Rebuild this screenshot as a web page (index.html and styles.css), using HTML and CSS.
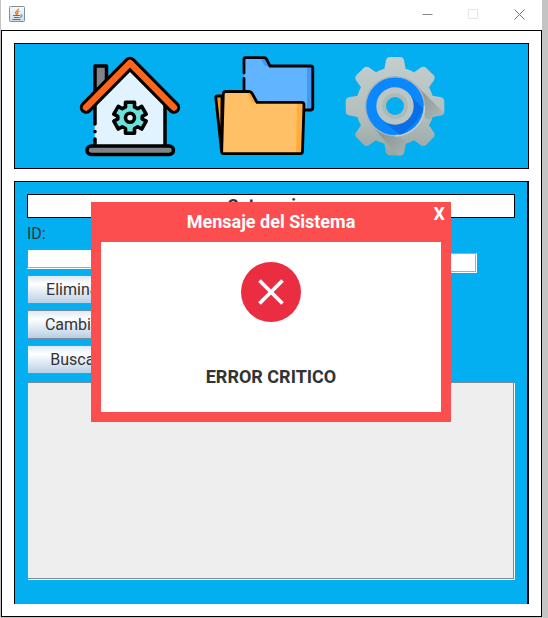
FILE: index.html
```html
<!DOCTYPE html>
<html lang="es">
<head>
<meta charset="utf-8">
<title>Mensaje del Sistema</title>
<link rel="stylesheet" href="styles.css">
</head>
<body>
<div class="window">
  <header class="titlebar">
    <svg class="java" viewBox="0 0 16 16" aria-hidden="true">
      <defs><linearGradient id="jbg" x2="0" y2="1"><stop offset="0" stop-color="#fafbfc"/><stop offset="1" stop-color="#cfdae4"/></linearGradient></defs>
      <rect x=".5" y=".5" width="15" height="15" rx="1" fill="url(#jbg)" stroke="#7890a4"/>
      <path d="M9.500 2.500C10 4.500 6 5 6.500 7L8 9M10.500 5C8 6 8 6.500 8.800 8.500" fill="none" stroke="#ec7d25" stroke-width="1.300"/>
      <path d="M4 9.500h7M5 11.500h5.500M3.500 13.500h8M11.500 9c2.500-.5 2 2-.5 2.300" fill="none" stroke="#56768f"/>
    </svg>
    <div class="controls">
      <button aria-label="Minimizar"><svg viewBox="0 0 11 11"><path d="M.5 5.500h10" stroke="#888"/></svg></button>
      <button aria-label="Maximizar" disabled><svg viewBox="0 0 11 11"><path d="M.5 .5h9v9h-9z" stroke="#e5e5e5"/></svg></button>
      <button aria-label="Cerrar"><svg viewBox="0 0 11 11"><path d="M.5 .5l10 10M10.500 .5l-10 10" stroke="#777"/></svg></button>
    </div>
  </header>
  <main class="frame">
    <nav class="toolbar">
      <button aria-label="Inicio">
        <svg viewBox="0 0 100 100">
          <path d="M14.700 42 50 9 85 42V90H14.700z" fill="#e0f3ff"/>
          <path d="M15 40V10h11.500v19z" fill="#80848a" stroke="#000" stroke-width="3.500" stroke-linejoin="round"/>
          <path d="M15 50V68M15 75.500v.2M15 83v6M85 50V90" stroke="#000" stroke-width="3.500" stroke-linecap="round"/>
          <path d="M6 51.500 50 7 94 51.500" fill="none" stroke="#000" stroke-width="12.500" stroke-linecap="round" stroke-linejoin="round"/>
          <path d="M6 51.500 50 7 94 51.500" fill="none" stroke="#ff651a" stroke-width="6.500" stroke-linecap="round" stroke-linejoin="round"/>
          <rect x="7" y="90" width="86.500" height="8.500" rx="4.200" fill="#80848a" stroke="#000" stroke-width="3.500"/>
          <g transform="translate(50 61.700)" stroke="#000" stroke-width="3.600" stroke-linejoin="round">
            <path d="M-4.500-15.500h9v4.700l3.200 1.800 4-2.300 4.500 7.800-4 2.200v2.600l4 2.200-4.500 7.800-4-2.300-3.200 1.800v4.700h-9v-4.700l-3.200-1.800-4 2.300-4.500-7.800 4-2.200v-2.600l-4-2.200 4.500-7.800 4 2.300 3.200-1.800z" fill="#6be3dc"/>
            <circle r="4.500" fill="#e0f3ff"/>
          </g>
        </svg>
      </button>
      <button aria-label="Carpetas">
        <svg viewBox="0 0 100 100">
          <path d="M31 3q0-1.300 1.500-1.300H51q1.700 0 2.500 1.500l3.500 6.800H98q1.800 0 1.800 1.800V52q0 2-2 2H31z" fill="#61b4ff"/>
          <path d="M94 10h5.500v43H94zM47 2h5l5 8h-5z" fill="#3f9af4"/>
          <path d="M31 17V3.500q0-1.800 1.500-1.800H51q1.700 0 2.500 1.500l3.500 6.800H97.500q2.300 0 2.300 2.300V51.500q0 2.500-2.500 2.500H91M31 22.500V35" fill="none" stroke="#000" stroke-width="2.800" stroke-linecap="round"/>
          <path d="M9 40H4q-1.300 0-1.200 1.500L8.500 95z" fill="#ff9a14" stroke="#000" stroke-width="2.800" stroke-linejoin="round"/>
          <path d="M10.300 38q0-2.500 2.500-2.500H36q2 0 3 1.800l5 9h44.500q2.500 0 2.500 2.500L89.500 95.500q0 2.200-2.300 2.200H11q-2.300 0-2.300-2.300z" fill="#ffc066"/>
          <path d="M84 46h6l-1 51h-6zM34 36h4l6 11h-5z" fill="#ffae3d"/>
          <path d="M10.300 38q0-2.500 2.500-2.500H36q2 0 3 1.800l5 9h44.500q2.500 0 2.500 2.500L89.500 95.500q0 2.200-2.300 2.200H11q-2.300 0-2.300-2.300z" fill="none" stroke="#000" stroke-width="2.800"/>
        </svg>
      </button>
      <button aria-label="Ajustes">
        <svg viewBox="0 0 100 100">
          <defs>
            <linearGradient id="metal" gradientUnits="userSpaceOnUse" x1="49" y1="1" x2="49" y2="100"><stop offset="0" stop-color="#c3cfce"/><stop offset=".6" stop-color="#b3bebd"/><stop offset="1" stop-color="#98a5a4"/></linearGradient>
            <linearGradient id="shade" gradientUnits="userSpaceOnUse" x1="55" y1="55" x2="80" y2="80"><stop offset="0" stop-color="#7f8a8a"/><stop offset="1" stop-color="#adb7b6"/></linearGradient>
            <path id="tooth" d="M38 15 40 4Q41 1 44 1H54Q57 1 58 4L60 15z"/>
            <clipPath id="gear">
              <circle cx="49" cy="50.300" r="39"/>
              <use href="#tooth"/><use href="#tooth" transform="rotate(45 49 50.300)"/><use href="#tooth" transform="rotate(90 49 50.300)"/><use href="#tooth" transform="rotate(135 49 50.300)"/><use href="#tooth" transform="rotate(180 49 50.300)"/><use href="#tooth" transform="rotate(225 49 50.300)"/><use href="#tooth" transform="rotate(270 49 50.300)"/><use href="#tooth" transform="rotate(315 49 50.300)"/>
            </clipPath>
            <clipPath id="disc"><circle cx="49" cy="50.300" r="28.500"/></clipPath>
          </defs>
          <g clip-path="url(#gear)">
            <path d="M-2 0h104v102h-104z" fill="url(#metal)"/>
            <path d="M70 29 98 57 82 64 79 62 78 50zM28 72 52 100H59V90L63 86 49 80z" fill="url(#shade)" opacity=".8"/>
          </g>
          <circle cx="49" cy="50.300" r="29.500" fill="#0a88fc" stroke="#a8b5b8" stroke-width="1.500"/>
          <path d="M78.500 50A29.500 29.500 0 0 1 49 79.800" fill="none" stroke="#c3d0d4" stroke-width="1.500"/>
          <path d="M62 37 78 53 70 66 55 80 36 64z" fill="#0a6fe6" clip-path="url(#disc)"/>
          <circle cx="49" cy="50" r="18.700" fill="#bac6c5"/>
          <circle cx="49" cy="50" r="13" fill="#aebab8"/>
          <circle cx="49" cy="50" r="9" fill="#03aff1"/>
        </svg>
      </button>
    </nav>
    <section class="panel">
      <h1>Categorias</h1>
      <form class="form">
        <div class="left">
          <label for="id">ID:</label>
          <input id="id" type="text">
          <button type="button">Eliminar</button>
          <button type="button">Cambiar</button>
          <button type="button">Buscar</button>
        </div>
        <input class="name" type="text" aria-label="Nombre">
      </form>
      <textarea aria-label="Resultados" readonly></textarea>
    </section>
  </main>
  <div class="dialog" role="dialog" aria-labelledby="dialog-title">
    <header><h2 id="dialog-title">Mensaje del Sistema</h2><button aria-label="Cerrar mensaje">X</button></header>
    <div class="message">
      <svg viewBox="0 0 60 60" aria-hidden="true"><circle cx="30" cy="30" r="30" fill="#eb2d42"/><path d="M18.500 18.500l23 23M41.500 18.500l-23 23" stroke="#fff" stroke-width="3.800"/></svg>
      <p>ERROR CRITICO</p>
    </div>
  </div>
</div>
</body>
</html>
```
FILE: styles.css
```css
* { box-sizing: border-box; }

body {
  margin: 0;
  padding: 0 6px 1px 1px;
  background: #c4c4c4;
  color: #333;
  font: 16px/20px Roboto, sans-serif;
}

button, input, textarea { font: inherit; color: inherit; margin: 0; }

.window {
  position: relative;
  display: flex;
  flex-direction: column;
  min-height: calc(100vh - 1px);
  background: #fff;
}

.titlebar {
  display: flex;
  justify-content: space-between;
  height: 30px;
  padding-left: 8px;
}

.java { width: 16px; height: 16px; margin-top: 6px; }

.controls { display: flex; }

.controls button {
  display: grid;
  place-items: center;
  width: 46px;
  height: 29px;
  padding: 0;
  border: 0;
  background: none;
}

.controls svg { width: 11px; height: 11px; fill: none; }

.frame {
  display: flex;
  flex: 1;
  flex-direction: column;
  gap: 12px;
  padding: 12px;
  border: 1px solid #000;
}

.toolbar {
  display: flex;
  gap: 33px;
  padding: 12px 65px;
  border: 1px solid #000;
  background: #03aff1;
}

.toolbar button { padding: 0; border: 0; background: none; }

.toolbar svg { display: block; width: 100px; height: 100px; overflow: visible; }

.panel {
  flex: 1;
  padding: 12px 12px 24px;
  border: solid #000;
  border-width: 1px 2px 0 1px;
  background: #03aff1;
}

h1, h2 { margin: 0; font-size: 18px; font-weight: 700; text-align: center; }

h1 { height: 24px; border: 1px solid #000; background: #fff; line-height: 22px; }

.form { display: flex; justify-content: space-between; padding: 6px 38px 8px 0; }

.left { display: flex; flex-direction: column; gap: 6px; width: 96px; }

.left label { height: 19px; }

input {
  height: 20px;
  padding: 0 2px;
  border: 1px solid #7a8a99;
  background: #fff;
}

.left input { width: 100%; border-bottom: 2px groove #fff; }

.name { width: 160px; margin-top: 29px; border: 2px groove #fff; }

.left button {
  height: 29px;
  padding: 0;
  border: 1px solid #7a8a99;
  background: linear-gradient(#dde8f3, #fff 30%, #b8cfe5);
}

textarea {
  display: block;
  width: calc(100% - 1px);
  height: 197px;
  border: 1px solid #7a8a99;
  outline: 0;
  background: #eee;
  box-shadow: 1px 1px #fff;
  resize: none;
}

.dialog {
  position: absolute;
  top: 202px;
  right: 1px;
  left: 0;
  width: 360px;
  margin: 0 auto;
  padding: 0 10px 10px;
  background: #fc4e4f;
}

.dialog header { position: relative; color: #fff; }

.dialog h2 { line-height: 40px; }

.dialog header button {
  position: absolute;
  top: 2px;
  right: -4px;
  padding: 0;
  border: 0;
  background: none;
  font-size: 18px;
  font-weight: 700;
}

.message {
  display: flex;
  flex-direction: column;
  align-items: center;
  gap: 44px;
  height: 170px;
  padding-top: 20px;
  background: #fff;
}

.message svg { width: 60px; height: 60px; }

.message p { margin: 0; font-size: 18px; font-weight: 700; line-height: 22px; }
```
